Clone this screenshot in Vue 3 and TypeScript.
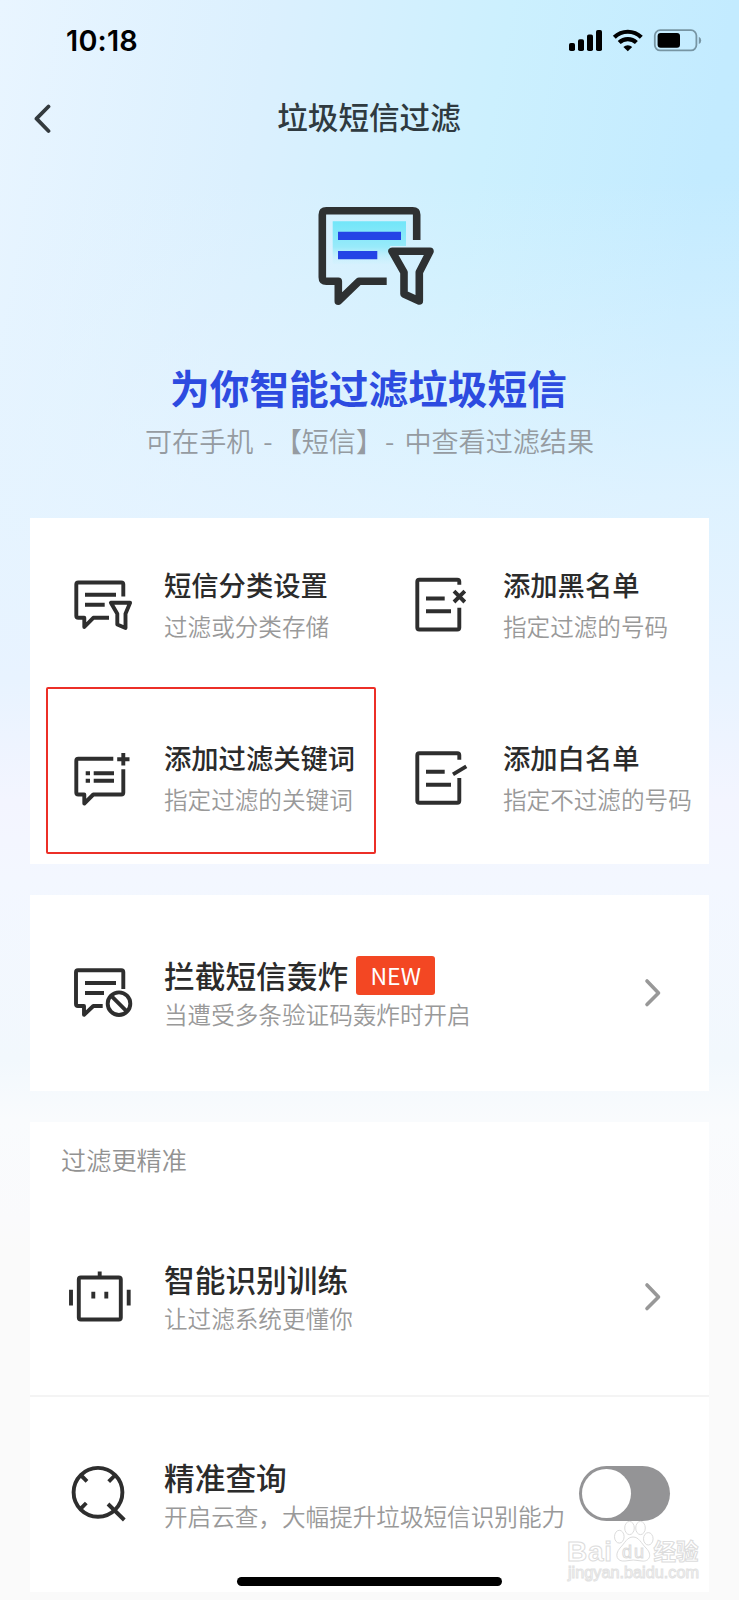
<script setup lang="ts">
import { ref } from 'vue'

interface Shortcut {
  icon: 'sort' | 'black' | 'keyword' | 'white'
  title: string
  note: string
  marked?: boolean
}

const shortcuts: Shortcut[] = [
  { icon: 'sort', title: '短信分类设置', note: '过滤或分类存储' },
  { icon: 'black', title: '添加黑名单', note: '指定过滤的号码' },
  { icon: 'keyword', title: '添加过滤关键词', note: '指定过滤的关键词', marked: true },
  { icon: 'white', title: '添加白名单', note: '指定不过滤的号码' },
]

const paths: Record<Shortcut['icon'], string> = {
  sort: 'M63.3 31.5V19.5Q63.3 17.5 61.3 17.5H18.3Q16.3 17.5 16.3 19.5V50.8Q16.3 52.8 18.3 52.8H24.3V62L33.3 52.8H49M25 29.8H56M25 39.8H44.7M50.9 37.8H70.1L65.5 48.8V63L57.3 59.5V48.8Z',
  black: 'M60.3 19.8V16.8Q60.3 14.8 58.3 14.8H20.3Q18.3 14.8 18.3 16.8V62.5Q18.3 64.5 20.3 64.5H58.3Q60.3 64.5 60.3 62.5V42.8M27 33.5H45.7M27 46.3H52M55 26.2L65.8 37M65.8 26.2L55 37',
  keyword: 'M53.3 20.8H18.3Q16.3 20.8 16.3 22.8V54.5Q16.3 56.5 18.3 56.5H24.3V65.5L33.3 56.5H61.3Q63.3 56.5 63.3 54.5V31.2M57.2 21.2H69.5M63.3 15V27.4M33.7 35.2H54M33.7 42.8H54M25.7 35.2H30M25.7 42.8H30',
  white: 'M60.3 21.8V17.2Q60.3 15.2 58.3 15.2H20.3Q18.3 15.2 18.3 17.2V62.8Q18.3 64.8 20.3 64.8H58.3Q60.3 64.8 60.3 62.8V40M27 33.8H45.7M27 46.8H52M54 36.4L67.3 28.4',
}

const cloudQuery = ref(false)
</script>

<template>
  <main class="screen">
    <header class="status">
      <span class="time">10:18</span>
      <svg class="signals" width="136" height="30" viewBox="0 0 136 30">
        <rect x="1" y="18" width="6" height="8" rx="1.8" />
        <rect x="10" y="14.3" width="6" height="11.7" rx="1.8" />
        <rect x="19" y="9.5" width="6" height="16.5" rx="1.8" />
        <rect x="28" y="5" width="6" height="21" rx="1.8" />
        <g fill="none" stroke="#000" stroke-width="4.2">
          <path d="M46.3 12.2a19.5 19.5 0 0 1 27 0" />
          <path d="M51.2 17.6a12.4 12.4 0 0 1 17.2 0" />
        </g>
        <path d="M59.8 26.2l-4.4-4.3a6.5 6.5 0 0 1 8.8 0z" />
        <rect x="86.8" y="5.2" width="41.6" height="20.2" rx="5.4" fill="none" stroke="#7795a3" stroke-width="1.8" />
        <rect x="89.6" y="8" width="22.4" height="14.8" rx="3" />
        <path d="M130.8 11.8q2.4 1 2.4 3.6t-2.4 3.6z" fill="#7795a3" />
      </svg>
    </header>

    <nav class="nav">
      <svg class="back" width="20" height="30" viewBox="0 0 20 30">
        <path d="M14.5 2.5L2.5 14.7L14.5 27" />
      </svg>
      <h1>垃圾短信过滤</h1>
    </nav>

    <section class="hero">
      <svg width="130" height="110" viewBox="0 0 130 110" fill="none">
        <defs>
          <linearGradient id="glow" x1="0" y1="0" x2="0" y2="1">
            <stop offset="0" stop-color="#72e6f9" />
            <stop offset="0.6" stop-color="#98eafa" />
            <stop offset="1" stop-color="#c8f1fc" stop-opacity="0.2" />
          </linearGradient>
        </defs>
        <path d="M22.7 21.3H96V46H80L85 64H22.7Z" fill="url(#glow)" />
        <path d="M28 31.7H91V40H28ZM28 51H67.3V59.3H28Z" fill="#2444e6" />
        <path
          d="M106.7 40V14.7Q106.7 10.7 102.7 10.7H16.3Q12.3 10.7 12.3 14.7V77.3Q12.3 81.3 16.3 81.3H28.3V101.3L49 81.3H76.7M82 51.3H120L109.3 72.3V101L94 94V72.3Z"
          stroke="#2e3132" stroke-width="7.6" stroke-linejoin="round"
        />
      </svg>
      <h2>为你智能过滤垃圾短信</h2>
      <p><span>可在手机 -</span><span>【短信】</span><span>- 中查看过滤结果</span></p>
    </section>

    <section class="card grid">
      <div v-for="item in shortcuts" :key="item.icon" class="cell" :class="{ marked: item.marked }">
        <svg class="icon" width="80" height="80" viewBox="0 0 80 80">
          <path :d="paths[item.icon]" />
        </svg>
        <div class="copy">
          <h3>{{ item.title }}</h3>
          <p>{{ item.note }}</p>
        </div>
      </div>
    </section>

    <section class="card row">
      <svg class="icon" width="80" height="80" viewBox="0 0 80 80">
        <path d="M63.3 36V19.3Q63.3 17.3 61.3 17.3H18Q16 17.3 16 19.3V51Q16 53 18 53H24V61.8L33.3 53H42.7M25 30H56M25 40H44" />
        <circle cx="59" cy="50.7" r="11.3" />
        <path d="M51 42.7L67 58.7" />
      </svg>
      <div class="copy">
        <h3><span>拦截短信轰炸</span><b>NEW</b></h3>
        <p>当遭受多条验证码轰炸时开启</p>
      </div>
      <svg class="more" width="18" height="30" viewBox="0 0 18 30"><path d="M3 3L14.5 15L3 26.5" /></svg>
    </section>

    <section class="card last">
      <h4>过滤更精准</h4>
      <div class="row">
        <svg class="icon" width="80" height="80" viewBox="0 0 80 80">
          <rect x="18.8" y="20.5" width="42" height="42" rx="2" />
          <path d="M39.7 14.5V20M11 32.8V48.5M68.7 32.8V48.5M33.3 34.8V41.5M46.3 34.8V41.5" />
        </svg>
        <div class="copy">
          <h3><span>智能识别训练</span></h3>
          <p>让过滤系统更懂你</p>
        </div>
        <svg class="more" width="18" height="30" viewBox="0 0 18 30"><path d="M3 3L14.5 15L3 26.5" /></svg>
      </div>
      <div class="row divided">
        <svg class="icon" width="80" height="80" viewBox="0 0 80 80">
          <circle cx="38" cy="37.3" r="24.4" />
          <path d="M20.7 20L27 26.3M55.3 20L48.7 26.7M20 54.4L26.3 48M48 49L64.3 65" />
        </svg>
        <div class="copy">
          <h3><span>精准查询</span></h3>
          <p>开启云查，大幅提升垃圾短信识别能力</p>
        </div>
        <button class="toggle" :class="{ on: cloudQuery }" @click="cloudQuery = !cloudQuery"><i></i></button>
      </div>
    </section>

    <svg class="mark" width="140" height="70" viewBox="0 0 140 70">
      <text x="5" y="41" font-size="28" font-weight="700" textLength="45">Bai</text>
      <path d="M71 17C77 17 79 23 84 28C91 35 87 42 80 41Q71 39 63 41C55 42 52 35 58 28C63 23 65 17 71 17Z" />
      <ellipse cx="57.3" cy="16.7" rx="4.8" ry="6.4" />
      <ellipse cx="67.5" cy="8" rx="4.8" ry="6.6" />
      <ellipse cx="78.5" cy="8" rx="4.8" ry="6.6" />
      <ellipse cx="86.3" cy="18.8" rx="4.8" ry="6.2" />
      <text x="60" y="38" font-size="18" textLength="22">du</text>
      <text x="91.5" y="39.5" font-size="22.5" font-weight="700" textLength="45">经验</text>
      <text class="site" x="6" y="58" font-size="16" textLength="131" lengthAdjust="spacingAndGlyphs">jingyan.baidu.com</text>
    </svg>
    <div class="home"></div>
  </main>
</template>

<style>
body {
  margin: 0;
}
</style>

<style scoped>
.screen {
  position: relative;
  box-sizing: border-box;
  width: 739px;
  height: 1600px;
  overflow: hidden;
  font-family: "Noto Sans CJK SC", "Noto Sans", sans-serif;
  color: #2b2b2b;
  background:
    linear-gradient(180deg, rgba(230, 244, 255, 0) 0, rgba(230, 244, 255, 0) 180px, rgba(230, 244, 255, 0.45) 370px, rgba(230, 244, 255, 0.78) 500px, #e8f3ff 680px, #f3f5ff 800px, #f3f7ff 880px, #f2f8fd 1060px, #f9fbfd 1120px, #fafafc 1220px, #fafafa 1250px),
    linear-gradient(100deg, #e9f5ff 0, #dbf0fe 27%, #ccf0fe 50%, #c3ebff 72%, #c2eaff 100%);
}

h1, h2, h3, h4, p {
  margin: 0;
  white-space: nowrap;
}

.status {
  display: flex;
  justify-content: space-between;
  height: 80px;
  padding: 0 35px 0 66px;
}

.time {
  font: 600 28.8px/82px Inter, sans-serif;
  letter-spacing: 0.2px;
  color: #000;
}

.signals {
  margin-top: 25px;
}

.nav {
  display: flex;
  align-items: center;
  height: 76px;
  padding-left: 34px;
}

.back {
  margin-top: 2px;
  fill: none;
  stroke: #333a3e;
  stroke-width: 3.8;
  stroke-linecap: round;
  stroke-linejoin: round;
}

h1 {
  flex: 1;
  margin: 0 55px 3px 0;
  text-align: center;
  font-size: 30.6px;
  font-weight: 500;
  line-height: 73px;
  color: #2f3a40;
}

.hero {
  display: flex;
  flex-direction: column;
  align-items: center;
  height: 318px;
  padding-top: 44px;
}

.hero > svg {
  flex: none;
  margin-left: 11px;
}

h2 {
  margin: 49px 2px 0 0;
  font-size: 39.7px;
  font-weight: 700;
  line-height: 56px;
  color: #2d4be0;
}

.hero p {
  display: flex;
  gap: 2px;
  margin-top: 6px;
  font-size: 27.1px;
  font-weight: 350;
  line-height: 40px;
  word-spacing: 4px;
  color: #959ba1;
}

.card {
  width: 679px;
  margin: 0 30px 31px;
  background: #fff;
}

.grid {
  display: grid;
  grid-template-columns: 339px 340px;
  grid-template-rows: 173px 173px;
}

.cell,
.row {
  display: flex;
  align-items: center;
  box-sizing: border-box;
  padding-left: 30px;
}

.row {
  height: 196px;
}

.marked {
  position: relative;
}

.marked::after {
  content: "";
  position: absolute;
  left: 16px;
  top: -4px;
  box-sizing: border-box;
  width: 330px;
  height: 167px;
  border: 2px solid #ec2f27;
  border-radius: 2px;
}

.icon {
  flex: none;
  margin-right: 24px;
  fill: none;
  stroke: #2e2e2e;
  stroke-width: 3.9;
  stroke-linejoin: round;
}

.cell h3 {
  font-size: 27.3px;
  font-weight: 500;
  line-height: 42px;
}

.cell p {
  line-height: 42px;
}

.copy p {
  font-size: 23.6px;
  font-weight: 350;
  color: #999;
}

.row .copy {
  padding-top: 3px;
}

.row h3 {
  display: flex;
  align-items: center;
  height: 38px;
  font-size: 30.7px;
  font-weight: 500;
  line-height: 36px;
}

.row h3 span {
  padding-bottom: 2px;
}

.row .copy p {
  line-height: 38px;
}

.row b {
  width: 79px;
  height: 39px;
  margin-left: 8px;
  border-radius: 3px;
  background: #f34723;
  color: #fff;
  font-size: 23px;
  font-weight: 400;
  line-height: 38px;
  text-align: center;
}

.more {
  margin: 0 47px 0 auto;
  fill: none;
  stroke: #989898;
  stroke-width: 3.6;
  stroke-linecap: round;
  stroke-linejoin: round;
}

.last {
  height: 470px;
  margin-bottom: 0;
}

h4 {
  height: 77px;
  padding-left: 31px;
  font-size: 25.2px;
  font-weight: 350;
  line-height: 75px;
  color: #929292;
}

.divided {
  height: 198px;
  border-top: 2px solid #f4f4f4;
}

.toggle {
  flex: none;
  width: 91px;
  height: 55px;
  margin: -3px 39px 0 auto;
  padding: 3px;
  border: 0;
  border-radius: 28px;
  background: #949496;
}

.toggle i {
  display: block;
  width: 49px;
  height: 49px;
  border-radius: 50%;
  background: #fff;
}

.toggle.on i {
  margin-left: auto;
}

.mark {
  position: absolute;
  left: 562px;
  top: 1520px;
  fill: #fff;
  stroke: #dcdcdc;
  stroke-width: 1;
  font-family: "Liberation Sans", "Noto Sans CJK SC", sans-serif;
}

.site {
  fill: #fff;
  stroke: #e2e2e2;
}

.home {
  position: absolute;
  left: 237px;
  top: 1577px;
  width: 265px;
  height: 9px;
  border-radius: 5px;
  background: #000;
}
</style>
